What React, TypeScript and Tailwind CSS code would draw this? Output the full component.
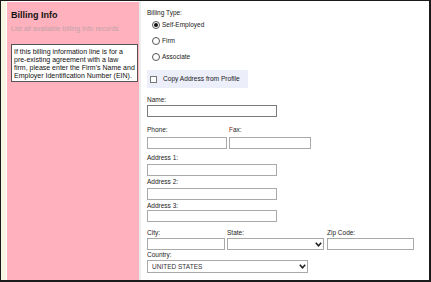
import React from 'react';

// 下拉箭头
const Chevron = () => (
  <svg width="7" height="5" viewBox="0 0 7 5" className="shrink-0">
    <polyline points="0.8,0.8 3.5,3.8 6.2,0.8" fill="none" stroke="#222" strokeWidth="1.6" />
  </svg>
);

const Radio = ({ label, checked }: { label: string; checked?: boolean }) => (
  <div className="flex h-[16px] items-center">
    <span className="ml-[5px] flex h-[8px] w-[8px] items-center justify-center rounded-full border border-[#555] bg-white">
      {checked && <span className="h-[4px] w-[4px] rounded-full bg-[#111]" />}
    </span>
    <span className="ml-[2px] text-[6.5px] leading-[8px] text-[#222]">{label}</span>
  </div>
);

const App: React.FC = () => {
  return (
    <div className="flex h-[282px] w-[431px] overflow-hidden border-t border-l border-r-2 border-b-2 border-[#1b1b1b] bg-white font-['Liberation_Sans',Arial,sans-serif]">
      {/* 左侧边条 */}
      <div className="w-[5px] bg-[#f7f6e3]" />
      <div className="w-[1px] bg-white" />

      {/* 粉色信息栏 */}
      <div className="mt-[1px] w-[132px] bg-[#ffb1bd] pl-[4px]">
        <div className="mt-[8px] text-[9px] font-bold leading-[11px] text-[#111]">Billing Info</div>
        <div className="mt-[3px] text-[7px] leading-[9px] text-[#bfa3aa]">List all available billing info records</div>
        <div className="mt-[11px] w-[127px] border border-[#555] bg-white px-[2px] pt-[3px] pb-[1px] text-[7px] leading-[8px] text-[#111] whitespace-nowrap">
          If this billing information line is for a<br />
          pre-existing agreement with a law<br />
          firm, please enter the Firm's Name and<br />
          Employer Identification Number (EIN).
        </div>
      </div>
      <div className="w-[2px] bg-[#ececec]" />

      {/* 表单 */}
      <div className="flex-1 pl-[6px] text-[6.5px] leading-[8px] text-[#222]">
        <div className="mt-[8px] h-[8px]">Billing Type:</div>
        <Radio label="Self-Employed" checked />
        <Radio label="Firm" />
        <Radio label="Associate" />

        <div className="mt-[5px] flex h-[18px] w-[101px] items-center bg-[#eceefa]">
          <span className="ml-[3px] h-[7px] w-[7px] border border-[#777] bg-white" />
          <span className="ml-[6px] text-[6.6px]">Copy Address from Profile</span>
        </div>

        <div className="mt-[8px] h-[8px]">Name:</div>
        <div className="mt-[1px] h-[12px] w-[130px] border border-[#7a7a7a] bg-white" />

        <div className="mt-[9px] flex gap-[2px]">
          <div className="w-[80px]">
            <div className="h-[8px]">Phone:</div>
            <div className="mt-[3px] h-[12px] border border-[#a9a9a9] bg-white" />
          </div>
          <div className="w-[82px]">
            <div className="h-[8px]"><span className="text-[#7a1a1a]">F</span>ax:</div>
            <div className="mt-[3px] h-[12px] border border-[#a9a9a9] bg-white" />
          </div>
        </div>

        <div className="mt-[5px] h-[8px]">Address 1:</div>
        <div className="mt-[2px] h-[12px] w-[130px] border border-[#a9a9a9] bg-white" />
        <div className="mt-[2px] h-[8px]">Address 2:</div>
        <div className="mt-[2px] h-[12px] w-[130px] border border-[#a9a9a9] bg-white" />
        <div className="mt-[2px] h-[8px]">Address 3:</div>
        <div className="mt-[0px] h-[12px] w-[130px] border border-[#a9a9a9] bg-white" />

        <div className="mt-[7px] flex">
          <div className="w-[78px]">
            <div className="h-[8px]">City:</div>
            <div className="mt-[1px] h-[12px] border border-[#a9a9a9] bg-white" />
          </div>
          <div className="ml-[2px] w-[97px]">
            <div className="h-[8px]">State:</div>
            <div className="mt-[1px] flex h-[12px] items-center justify-end border border-[#a9a9a9] bg-white pr-[1px]">
              <Chevron />
            </div>
          </div>
          <div className="ml-[3px] w-[87px]">
            <div className="h-[8px]">Zip Code:</div>
            <div className="mt-[1px] h-[12px] border border-[#a9a9a9] bg-white" />
          </div>
        </div>

        <div className="mt-[1px] h-[8px]">Country:</div>
        <div className="mt-[1px] flex h-[13px] w-[161px] items-center justify-between border border-[#a9a9a9] bg-white pl-[4px] pr-[1px]">
          <span className="text-[6.5px] text-[#333]">UNITED STATES</span>
          <Chevron />
        </div>
      </div>
    </div>
  );
};

export default App;
